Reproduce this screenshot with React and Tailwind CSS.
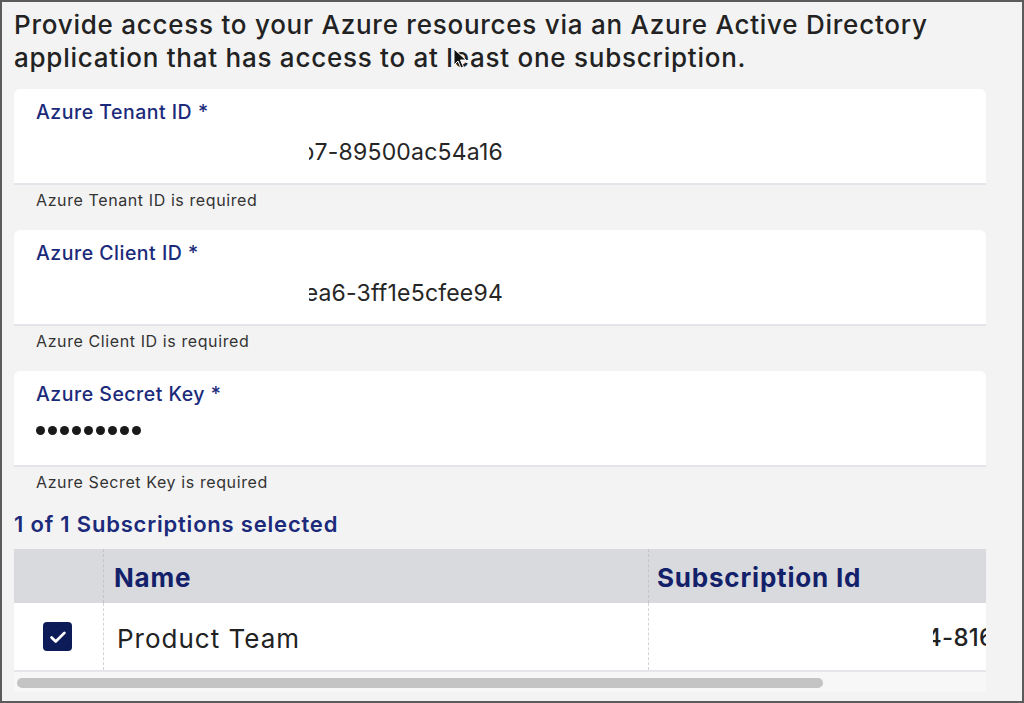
import React from "react";

function Field({ label, value, secret, error }) {
  return (
    <div>
      <div className="bg-white rounded-t-[6px] h-[96px] border-b-2 border-[#e4e4ea] pt-[11px] pl-[22px]">
        <div className="text-[19.5px] leading-[24px] font-medium tracking-[0.5px] text-[#1b2a7a]">{label}</div>
        {secret ? (
          <div className="mt-[18px] flex gap-[3px] h-[12px] items-center">
            {Array.from({ length: 9 }).map((_, i) => (
              <span key={i} className="w-[9px] h-[9px] rounded-full bg-[#1a1a1a]" />
            ))}
          </div>
        ) : (
          <div className="mt-[13px] ml-[273px] w-[194px] overflow-hidden flex justify-end">
            <span className="whitespace-nowrap text-[23px] leading-[30px] tracking-[0.2px] text-[#262626]">{value}</span>
          </div>
        )}
      </div>
      <div className="pl-[22px] pt-[5px] h-[45px] text-[16px] leading-[20px] tracking-[0.6px] text-[#333]">{error}</div>
    </div>
  );
}

export default function App() {
  return (
    <div className="relative w-[1024px] h-[703px] bg-[#f3f3f3] border-2 border-[#5b5b5b] overflow-hidden font-['Inter',sans-serif]">
      <div className="pl-[12px] pr-[36px]">
        <p className="pt-[6px] text-[26px] leading-[33px] font-medium tracking-[0.75px] text-[#222]">
          Provide access to your Azure resources via an Azure Active Directory application that has access to at least one subscription.
        </p>
        <div className="mt-[15px]">
          <Field label="Azure Tenant ID *" value="c-1b7-89500ac54a16" error="Azure Tenant ID is required" />
          <Field label="Azure Client ID *" value="9ea6-3ff1e5cfee94" error="Azure Client ID is required" />
          <Field label="Azure Secret Key *" secret error="Azure Secret Key is required" />
        </div>
        <div className="-mt-[1px] text-[22px] leading-[26px] font-semibold tracking-[0.8px] text-[#1b2a7a]">1 of 1 Subscriptions selected</div>
        <div className="mt-[12px] overflow-hidden">
          <div className="w-[1100px]">
            <div className="flex h-[54px] bg-[#d9dadd]">
              <div className="w-[90px] shrink-0 border-r border-dashed border-[#c4c4c8]" />
              <div className="w-[545px] shrink-0 border-r border-dashed border-[#c4c4c8] pl-[10px] pt-[2px] flex items-center text-[26px] font-bold tracking-[0.8px] text-[#13216a]">Name</div>
              <div className="flex-1 pl-[8px] pt-[2px] flex items-center text-[26px] font-bold tracking-[0.8px] text-[#13216a]">Subscription Id</div>
            </div>
            <div className="flex h-[69px] bg-white border-b-2 border-[#e6e6ea]">
              <div className="w-[90px] shrink-0 border-r border-dashed border-[#d4d4d8] flex items-center pl-[29px]">
                <span className="w-[29px] h-[29px] rounded-[4px] bg-[#0d1b58] flex items-center justify-center">
                  <svg width="22" height="22" viewBox="0 0 24 24" fill="none" stroke="white" strokeWidth="3" strokeLinecap="round" strokeLinejoin="round">
                    <path d="M5 12.5l4.5 4.5L19 7.5" />
                  </svg>
                </span>
              </div>
              <div className="w-[545px] shrink-0 border-r border-dashed border-[#d4d4d8] pl-[13px] pt-[3px] flex items-center text-[26px] tracking-[1px] text-[#222]">Product Team</div>
              <div className="flex-1 flex items-center pl-[284px] pt-[3px]">
                <div className="overflow-hidden">
                  <span className="block -ml-[7px] whitespace-nowrap text-[24px] font-medium tracking-[0.3px] text-[#222]">4-8162b1c97e0a</span>
                </div>
              </div>
            </div>
          </div>
          <div className="h-[20px] bg-[#f7f7f7] pt-[6px] pl-[3px]">
            <div className="w-[806px] h-[10px] rounded-full bg-[#c4c4c4]" />
          </div>
        </div>
      </div>
      <svg className="absolute left-[451px] top-[46px]" width="14" height="22" viewBox="0 0 14 22">
        <path d="M1 1 L1 17 L5 13 L8 20 L10.5 19 L7.5 12 L13 12 Z" fill="#111" stroke="#fff" strokeWidth="1" />
      </svg>
    </div>
  );
}
